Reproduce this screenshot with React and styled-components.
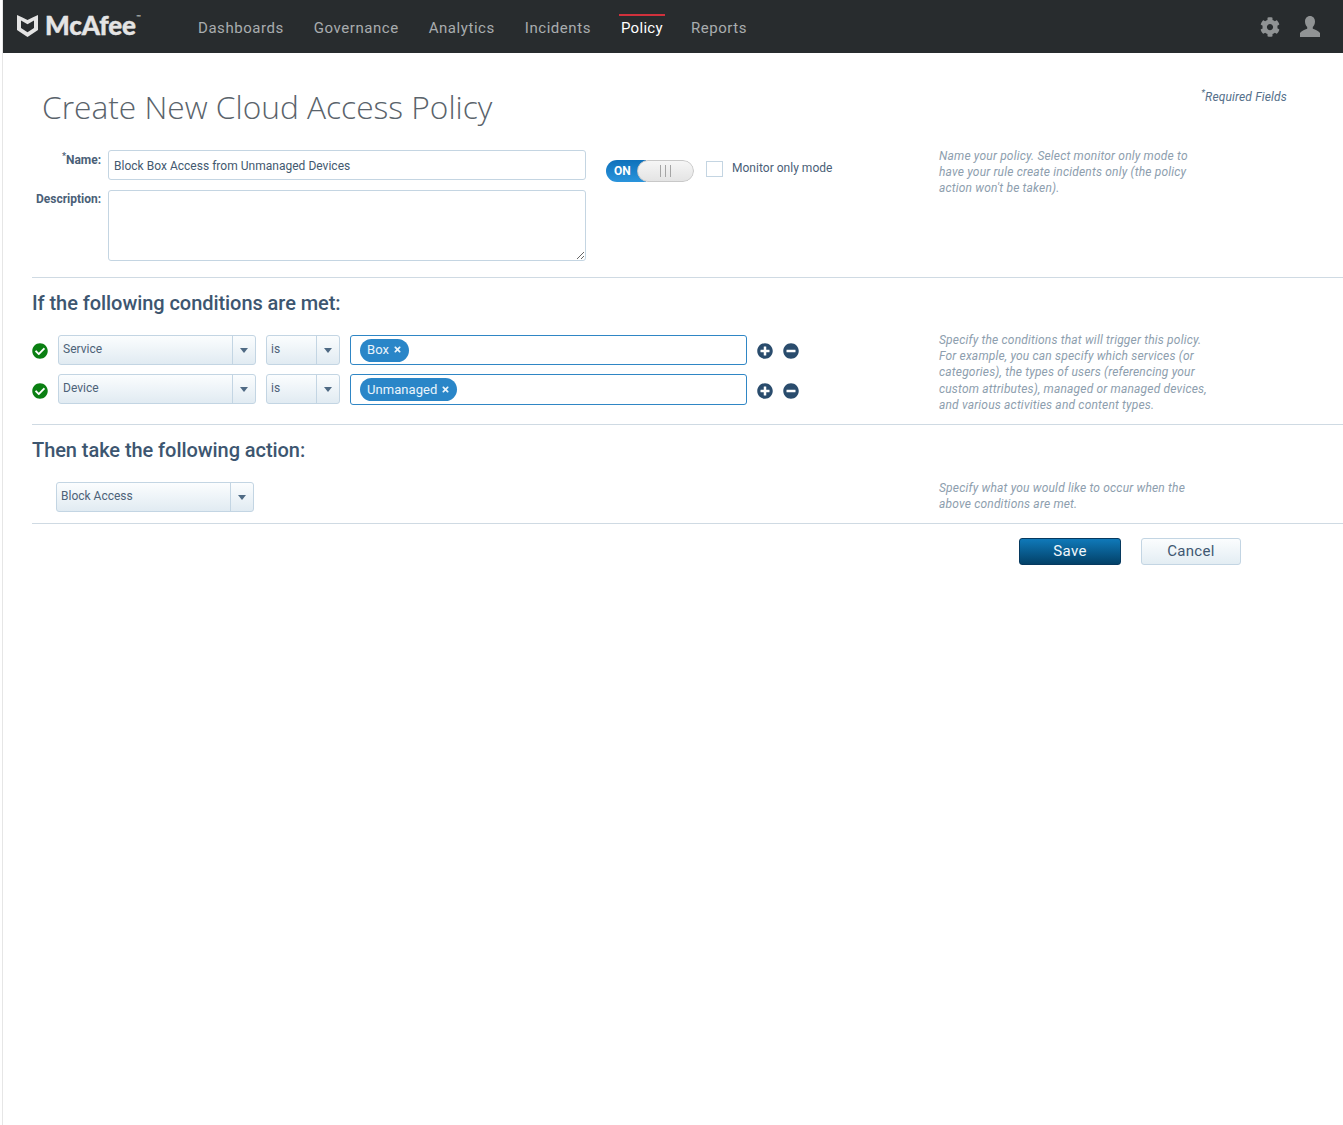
import React from 'react';
import styled, { createGlobalStyle } from 'styled-components';
import { FaCog, FaCheckCircle, FaPlusCircle, FaMinusCircle, FaTimes } from 'react-icons/fa';

const Global = createGlobalStyle`
  html, body { margin: 0; padding: 0; background: #fff; }
  body { font-family: Roboto, "Liberation Sans", sans-serif; color: #3f5872; }
  * { box-sizing: border-box; }
`;

const Page = styled.div`
  margin-left: 2px; border-left: 1px solid #e6e6e6; min-height: 1125px; overflow: hidden;
`;
const Header = styled.header`
  height: 53px; background: #282c2e; display: flex; align-items: center; padding: 0 23px 0 14px;
`;
const Logo = styled.div`
  width: 181px; display: flex; align-items: center; gap: 7px; color: #e4e4e4;
  font-family: Lato, sans-serif; font-weight: 900; font-size: 26px; letter-spacing: -0.1px; margin-top: -3px;
  -webkit-text-stroke: 0.4px #e4e4e4;
  sup { font-size: 6px; font-weight: 400; align-self: flex-start; margin: 4px 0 0 -7px; -webkit-text-stroke: 0; }
`;
const Nav = styled.nav`
  display: flex; gap: 30px; height: 100%; flex: 1;
`;
const NavItem = styled.a`
  position: relative; display: flex; align-items: center; padding-top: 2px; font-size: 15px;
  letter-spacing: ${p => (p.$active ? '0.3px' : '0.55px')};
  margin-right: ${p => (p.$active ? '-2px' : '0')};
  color: ${p => (p.$active ? '#ffffff' : '#a9adaf')};
  ${p => p.$active && `
    &::before { content: ''; position: absolute; top: 14px; left: -2px; right: -2px; height: 2px; background: #d0313c; }
  `}
`;
const HeaderIcons = styled.div`
  display: flex; align-items: center; gap: 20px; color: #909394;
`;
const Main = styled.main`
  padding-left: 29px;
`;
const TitleRow = styled.div`
  height: 97px; display: flex; justify-content: space-between; padding-right: 56px;
`;
const Title = styled.h1`
  margin: 34px 0 0 10px; font-family: "Open Sans", sans-serif; font-weight: 300; font-size: 31.7px; line-height: 40px; color: #5a636b;
`;
const Required = styled.div`
  margin-top: 37px; font-size: 12px; line-height: 14px; font-style: italic; color: #55708a; letter-spacing: 0.16px;
  sup { font-size: 9px; line-height: 0; }
`;
const Section = styled.section`
  display: grid; grid-template-columns: 907px 1fr; border-bottom: 1px solid #cfdae3;
`;
const SectionBody = styled.div`
  padding-bottom: ${p => p.$pad}px;
`;
const Help = styled.p`
  margin: ${p => p.$top}px 0 0; width: 270px; font-size: 12px; line-height: 16.2px; font-style: italic; color: #8d9eae; letter-spacing: 0.18px;
`;
const FieldRow = styled.div`
  display: flex; align-items: flex-start; height: ${p => p.$h}px; margin-bottom: 10px;
  &:last-child { margin-bottom: 0; }
`;
const FieldLabel = styled.label`
  width: 69px; margin-right: 7px; text-align: right; font-size: 12px; font-weight: 700; line-height: 14px; color: #4a6077; padding-top: 2px;
  letter-spacing: -0.02px;
  sup { font-size: 9px; line-height: 0; }
`;
const NameLabel = styled(FieldLabel)`
  padding-top: 3px;
`;
const TextInput = styled.input`
  width: 478px; height: 30px; border: 1px solid #c4d5e2; border-radius: 3px; padding: 1px 5px 0; font: 12px Roboto, sans-serif; letter-spacing: 0.02px; color: #43596f; outline: none;
`;
const TextArea = styled.textarea`
  width: 478px; height: 71px; border: 1px solid #c4d5e2; border-radius: 3px; resize: both; display: block; outline: none;
`;
const Toggle = styled.div`
  width: 88px; height: 22px; margin: 10px 0 0 20px; display: flex; border-radius: 11px; overflow: hidden;
`;
const ToggleOn = styled.span`
  width: 40px; background: linear-gradient(#0f71bb, #2a94dc); color: #fff; font-size: 12px; font-weight: 700; line-height: 22px; padding-left: 8px;
`;
const ToggleKnob = styled.span`
  flex: 1; margin-left: -9px; border-radius: 11px; border: 1px solid #c8c8c8; background: linear-gradient(#f6f6f6, #e4e4e4);
  display: flex; align-items: center; justify-content: center; gap: 4px;
  i { width: 1px; height: 12px; background: #a5a5a5; }
`;
const CheckBox = styled.span`
  width: 17px; height: 16px; margin: 11px 9px 0 12px; border: 1px solid #c4d5e2; background: #fff;
`;
const CheckLabel = styled.span`
  margin-top: 11px; font-size: 12px; line-height: 14px; letter-spacing: 0.02px; color: #4a6077;
`;
const Heading = styled.h2`
  margin: 13px 0 20px; font-size: 20px; line-height: 24px; font-weight: 500; color: #3d5670; letter-spacing: -0.06px;
`;
const CondRow = styled.div`
  display: flex; align-items: center; gap: 10px; height: 30px; margin-bottom: 9px;
  &:last-child { margin-bottom: 0; height: 31px; }
`;
const Status = styled(FaCheckCircle)`
  width: 16px; height: 16px; color: #0a7f12; margin-top: 2px;
`;
const Select = styled.div`
  width: ${p => p.$w}px; height: 30px; align-self: flex-start; margin-left: ${p => p.$ml || 0}px; display: flex; border: 1px solid #c3d5e3; border-radius: 3px;
  background: linear-gradient(#fbfdfe, #e1ebf2); font-size: 12px; letter-spacing: 0; color: #4d6278;
`;
const SelectText = styled.span`
  flex: 1; line-height: 27px; padding-left: 4px;
`;
const SelectArrow = styled.span`
  width: 23px; border-left: 1px solid #c3d5e3; display: flex; align-items: center; justify-content: center;
  &::after { content: ''; border: 4.5px solid transparent; border-top: 5px solid #4f6a84; border-bottom: 0; }
`;
const TagBox = styled.div`
  width: 397px; height: 100%; border: 1px solid #2f86c5; border-radius: 3px; display: flex; align-items: center; padding-left: 9px; background: #fff;
`;
const Tag = styled.span`
  height: 23px; padding: 0 7px 1px; display: inline-flex; align-items: center; gap: 4px; border-radius: 12px; background: #2a86c8; color: #eaf4fb; font-size: 13px; letter-spacing: 0.05px;
  svg { width: 9px; height: 9px; }
`;
const RowActions = styled.div`
  display: flex; gap: 10px; color: #2a4c6d; margin-top: 2px;
  svg { width: 16px; height: 16px; display: block; }
`;
const Footer = styled.div`
  display: flex; justify-content: flex-end; gap: 20px; padding: 14px 102px 0 0;
`;
const SaveButton = styled.button`
  width: 102px; height: 27px; padding: 0 0 2px; border: 1px solid #06395f; border-radius: 3px; background: linear-gradient(#0f79b9, #034168); color: #f2f7fa; font: 15px Roboto, sans-serif; letter-spacing: 0.3px;
`;
const CancelButton = styled.button`
  width: 100px; height: 27px; padding: 0 0 2px; border: 1px solid #c3d5e3; border-radius: 3px; background: linear-gradient(#fbfdfe, #e3edf3); color: #3f5872; font: 15px Roboto, sans-serif; letter-spacing: 0.3px;
`;

const Shield = () => (
  <svg width="21" height="23" viewBox="0 0 21 23" aria-hidden="true">
    <path fill="#e4e4e4" d="M0 1l5.500 2.500L10.500 6l5-2.500L21 1v15l-10.500 7L0 16zM4 6.600V14l6.500 4.300L17 14V6.600l-6.500 3.700z" />
  </svg>
);
const UserIcon = () => (
  <svg width="20" height="21" viewBox="0 0 20 21" aria-hidden="true">
    <path fill="currentColor" d="M10 0c3 0 5 2.300 5 5.600 0 2.300-1 4.300-2.200 5.400v1.700c2.500 1 6.200 2.200 7.200 4.300V21H0v-4c1-2.100 4.700-3.300 7.200-4.300V11C6 9.900 5 7.900 5 5.600 5 2.300 7 0 10 0z" />
  </svg>
);
const Gear = styled(FaCog)`
  width: 20px; height: 20px;
`;

const Dropdown = ({ w, ml, children }) => (
  <Select $w={w} $ml={ml}>
    <SelectText>{children}</SelectText>
    <SelectArrow />
  </Select>
);

const Condition = ({ field, tag }) => (
  <CondRow>
    <Status />
    <Dropdown w={198}>{field}</Dropdown>
    <Dropdown w={74}>is</Dropdown>
    <TagBox>
      <Tag>{tag}<FaTimes /></Tag>
    </TagBox>
    <RowActions>
      <FaPlusCircle />
      <FaMinusCircle />
    </RowActions>
  </CondRow>
);

export default function App() {
  return (
    <Page>
      <Global />
      <Header>
        <Logo><Shield />McAfee<sup>™</sup></Logo>
        <Nav>
          <NavItem>Dashboards</NavItem>
          <NavItem>Governance</NavItem>
          <NavItem>Analytics</NavItem>
          <NavItem>Incidents</NavItem>
          <NavItem $active>Policy</NavItem>
          <NavItem>Reports</NavItem>
        </Nav>
        <HeaderIcons>
          <Gear />
          <UserIcon />
        </HeaderIcons>
      </Header>
      <Main>
        <TitleRow>
          <Title>Create New Cloud Access Policy</Title>
          <Required><sup>*</sup>Required Fields</Required>
        </TitleRow>
        <Section>
          <SectionBody $pad={16}>
            <FieldRow $h={30}>
              <NameLabel><sup>*</sup>Name:</NameLabel>
              <TextInput defaultValue="Block Box Access from Unmanaged Devices" />
              <Toggle>
                <ToggleOn>ON</ToggleOn>
                <ToggleKnob><i /><i /><i /></ToggleKnob>
              </Toggle>
              <CheckBox />
              <CheckLabel>Monitor only mode</CheckLabel>
            </FieldRow>
            <FieldRow $h={71}>
              <FieldLabel>Description:</FieldLabel>
              <TextArea />
            </FieldRow>
          </SectionBody>
          <Help $top={-2}>Name your policy. Select monitor only mode to have your rule create incidents only (the policy action won't be taken).</Help>
        </Section>
        <Section>
          <SectionBody $pad={19}>
            <Heading>If the following conditions are met:</Heading>
            <Condition field="Service" tag="Box" />
            <Condition field="Device" tag="Unmanaged" />
          </SectionBody>
          <Help $top={54}>Specify the conditions that will trigger this policy. For example, you can specify which services (or categories), the types of users (referencing your custom attributes), managed or managed devices, and various activities and content types.</Help>
        </Section>
        <Section>
          <SectionBody $pad={11}>
            <Heading>Then take the following action:</Heading>
            <Dropdown w={198} ml={24}>Block Access</Dropdown>
          </SectionBody>
          <Help $top={55}>Specify what you would like to occur when the above conditions are met.</Help>
        </Section>
        <Footer>
          <SaveButton>Save</SaveButton>
          <CancelButton>Cancel</CancelButton>
        </Footer>
      </Main>
    </Page>
  );
}
